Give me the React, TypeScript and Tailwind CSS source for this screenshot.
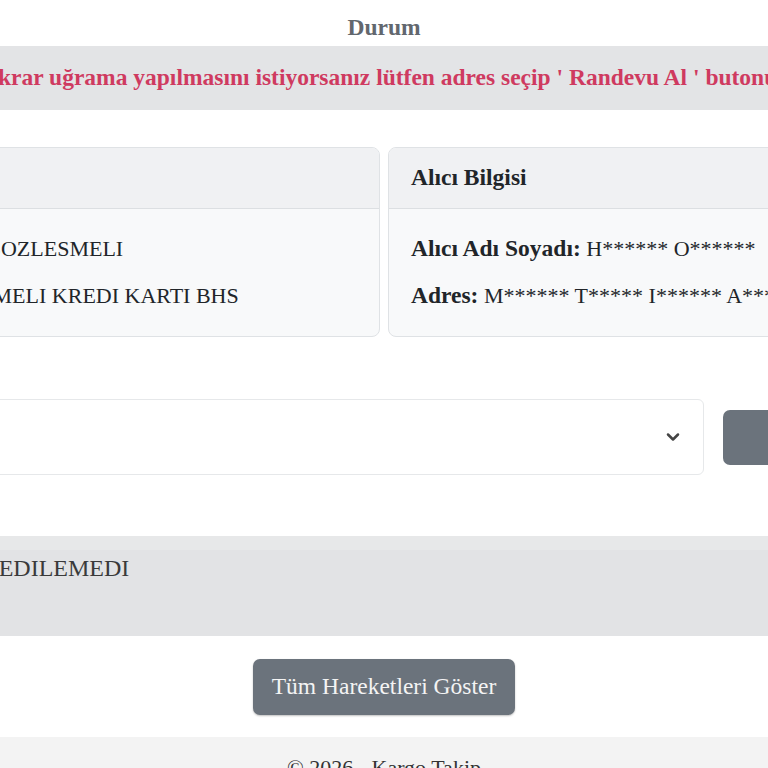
import { ChevronDown } from 'lucide-react'

// Shipment status page, scaled up and cropped to the 768px window.
// The wide inner frame overflows on both sides so the edges clip like the capture.

function InfoLine({ label, value }: { label: string; value: string }) {
  return (
    <p className="mb-[14px] whitespace-nowrap leading-[33px]">
      <b className="text-[23.5px] font-bold">{label}</b> {value}
    </p>
  )
}

export default function App() {
  return (
    <div className="h-[768px] w-[768px] overflow-hidden bg-white font-['Liberation_Serif','Times_New_Roman',serif] text-[22px] text-[#212529]">
      <div className="-mx-[400px] shadow-[0_3px_4px_rgba(0,0,0,0.18)]">
        <h5 className="pt-[11px] pb-[2px] text-center text-[23.5px] leading-[33px] font-bold text-[#62676e]">
          Durum
        </h5>

        <div className="flex h-[64px] items-center bg-[#e3e4e6] pl-[374px] whitespace-nowrap text-[23.5px] font-bold text-[#cf3a60]">
          Tekrar uğrama yapılmasını istiyorsanız lütfen adres seçip ' Randevu Al ' butonuna tıklayınız.
        </div>

        <div className="mt-[37px] grid grid-cols-2 gap-2">
          <div className="h-[190px] overflow-hidden rounded-[8px] border border-[#dfe2e5] bg-[#f8f9fa]">
            <div className="h-[61px] border-b border-[#dcdfe2] bg-[#f0f1f3]" />
            <div className="pt-[23px] pl-[244px]">
              <InfoLine label="Gönderi Tipi:" value="SOZLESMELI" />
              <InfoLine label="Ürün:" value="SOZLESMELI KREDI KARTI BHS" />
            </div>
          </div>
          <div className="h-[190px] overflow-hidden rounded-[8px] border border-[#dfe2e5] bg-[#f8f9fa]">
            <div className="flex h-[61px] items-center border-b border-[#dcdfe2] bg-[#f0f1f3] pl-[22px] text-[23.5px] font-bold">
              Alıcı Bilgisi
            </div>
            <div className="pt-[23px] pl-[22px]">
              <InfoLine label="Alıcı Adı Soyadı:" value="H****** O****** " />
              <InfoLine label="Adres:" value="M****** T***** I****** A****** M******" />
            </div>
          </div>
        </div>

        <div className="mt-[62px] flex items-center gap-[19px] pr-[185px]">
          <div className="flex h-[76px] flex-1 items-center justify-end rounded-[6px] border border-[#e6e8ea] bg-white pr-[20px]">
            <ChevronDown className="h-[20px] w-[20px] text-[#444]" strokeWidth={3} />
          </div>
          <button
            type="button"
            className="h-[55px] w-[260px] shrink-0 rounded-[7px] bg-[#6b737c] text-[23.5px] font-bold text-white"
          >
            Randevu Al
          </button>
        </div>

        <div className="mt-[61px] h-[100px] border-t-[14px] border-[#e7e8e9] bg-[#e2e3e5] pt-[2px] pl-[306px] text-[24px] leading-[33px] whitespace-nowrap text-[#3a3a3a]">
          TESLIM EDILEMEDI
        </div>

        <div className="flex justify-center pt-[23px] pb-[22px]">
          <button
            type="button"
            className="h-[56px] w-[262px] rounded-[7px] bg-[#6b737c] text-[23.5px] text-[#f4f4f4] shadow-[0_1px_2px_rgba(0,0,0,0.25)]"
          >
            Tüm Hareketleri Göster
          </button>
        </div>
      </div>

      <footer className="bg-[#f3f3f3] pt-[14px] pb-[20px] text-center text-[22px] text-[#333]">
        © 2026 - Kargo Takip
      </footer>
    </div>
  )
}
